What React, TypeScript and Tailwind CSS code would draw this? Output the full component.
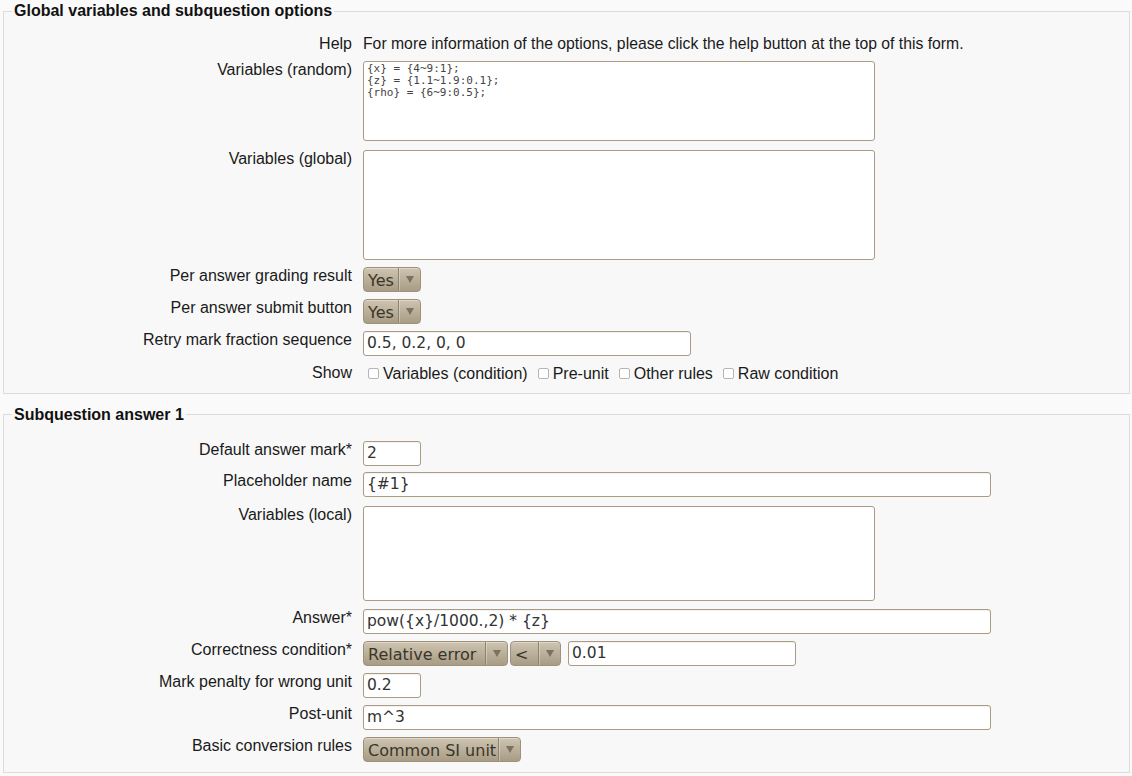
import type { ReactNode } from 'react';

const labelFont = { fontFamily: '"Liberation Sans", Arial, sans-serif' };

function Row({ label, children, className = '' }: { label: string; children: ReactNode; className?: string }) {
  return (
    <div className={`flex items-start ${className}`}>
      <div className="w-[348px] shrink-0 text-right text-[16px] leading-[18px] text-[#1a1a1a] pt-[0.5px] whitespace-nowrap">{label}</div>
      <div className="ml-[11px] flex items-start">{children}</div>
    </div>
  );
}

function TextInput({ value, width }: { value: string; width: string }) {
  return (
    <div
      className={`${width} h-[25px] rounded-[3px] border border-[#a99c82] bg-white pl-[3px] text-[15.5px] leading-[23px] text-[#333] overflow-hidden whitespace-nowrap shadow-[inset_0_1px_1px_rgba(0,0,0,0.06)]`}
      style={{ fontFamily: '"DejaVu Sans", sans-serif' }}
    >
      {value}
    </div>
  );
}

function TextArea({ lines, height }: { lines: string[]; height: string }) {
  return (
    <div
      className={`w-[512px] ${height} rounded-[3px] border border-[#a99c82] bg-white px-[3px] pt-[1px] text-[11px] leading-[12px] text-[#444] whitespace-pre`}
      style={{ fontFamily: '"DejaVu Sans Mono", monospace' }}
    >
      {lines.join('\n')}
    </div>
  );
}

function Arrow() {
  return (
    <svg width="8" height="7" viewBox="0 0 8 7" className="block">
      <polygon points="0,0 8,0 4,7" fill="#7a7161" />
    </svg>
  );
}

function Select({ value, width, arrow = 'w-[22px]' }: { value: string; width: string; arrow?: string }) {
  return (
    <div
      className={`${width} h-[25px] flex rounded-[4px] border border-[#9d917b] bg-gradient-to-b from-[#cec4b0] to-[#a89c85] overflow-hidden shadow-[inset_0_1px_0_rgba(255,255,255,0.35)]`}
      style={{ fontFamily: '"DejaVu Sans", sans-serif' }}
    >
      <div className="flex-1 min-w-0 overflow-hidden whitespace-nowrap pl-[4px] text-[16px] leading-[25px] text-[#3a352c]">{value}</div>
      <div className={`${arrow} shrink-0 flex items-center justify-center border-l border-[#8e836e] shadow-[inset_1px_0_0_rgba(255,255,255,0.3)]`}>
        <Arrow />
      </div>
    </div>
  );
}

function Check({ label }: { label: string }) {
  return (
    <div className="flex items-center">
      <span className="ml-[5px] mr-[4px] inline-block w-[11px] h-[11px] rounded-[2px] border border-[#b5b5b5] bg-white" />
      <span className="text-[16px] leading-[18px] text-[#1a1a1a] whitespace-nowrap">{label}</span>
    </div>
  );
}

function Legend({ children }: { children: ReactNode }) {
  return (
    <legend className="ml-[8px] px-[2px] text-[16px] leading-[18px] font-bold text-[#111]">{children}</legend>
  );
}

export default function App() {
  return (
    <div className="min-h-[776px] w-[1132px] bg-[#fafafa] pt-[2px] pl-[3px] pr-[2px]" style={labelFont}>
      <fieldset className="border border-[#dcdcdc] bg-[#f8f8f8] pb-[10px]">
        <Legend>Global variables and subquestion options</Legend>
        <Row label="Help" className="mt-[14px]">
          <div className="text-[15.75px] leading-[18px] pt-[0.5px] text-[#1a1a1a] whitespace-nowrap">
            For more information of the options, please click the help button at the top of this form.
          </div>
        </Row>
        <Row label="Variables (random)" className="mt-[8px]">
          <TextArea lines={['{x} = {4~9:1};', '{z} = {1.1~1.9:0.1};', '{rho} = {6~9:0.5};']} height="h-[80px]" />
        </Row>
        <Row label="Variables (global)" className="mt-[9px]">
          <TextArea lines={[]} height="h-[110px]" />
        </Row>
        <Row label="Per answer grading result" className="mt-[7px]">
          <Select value="Yes" width="w-[58px]" />
        </Row>
        <Row label="Per answer submit button" className="mt-[7px]">
          <Select value="Yes" width="w-[58px]" />
        </Row>
        <Row label="Retry mark fraction sequence" className="mt-[7px]">
          <TextInput value="0.5, 0.2, 0, 0" width="w-[328px]" />
        </Row>
        <Row label="Show" className="mt-[8px]">
          <div className="flex items-center gap-[5px] pt-[1px]">
            <Check label="Variables (condition)" />
            <Check label="Pre-unit" />
            <Check label="Other rules" />
            <Check label="Raw condition" />
          </div>
        </Row>
      </fieldset>

      <fieldset className="mt-[12px] border border-[#dcdcdc] bg-[#f8f8f8] pb-[10px]">
        <Legend>Subquestion answer 1</Legend>
        <Row label="Default answer mark*" className="mt-[17px]">
          <TextInput value="2" width="w-[58px]" />
        </Row>
        <Row label="Placeholder name" className="mt-[6px]">
          <TextInput value="{#1}" width="w-[628px]" />
        </Row>
        <Row label="Variables (local)" className="mt-[9px]">
          <TextArea lines={[]} height="h-[95px]" />
        </Row>
        <Row label="Answer*" className="mt-[8px]">
          <TextInput value="pow({x}/1000.,2) * {z}" width="w-[628px]" />
        </Row>
        <Row label="Correctness condition*" className="mt-[7px]">
          <Select value="Relative error" width="w-[145px]" />
          <div className="ml-[2px]">
            <Select value="<" width="w-[51px]" />
          </div>
          <div className="ml-[7px]">
            <TextInput value="0.01" width="w-[228px]" />
          </div>
        </Row>
        <Row label="Mark penalty for wrong unit" className="mt-[7px]">
          <TextInput value="0.2" width="w-[58px]" />
        </Row>
        <Row label="Post-unit" className="mt-[7px]">
          <TextInput value="m^3" width="w-[628px]" />
        </Row>
        <Row label="Basic conversion rules" className="mt-[7px]">
          <Select value="Common SI unit" width="w-[158px]" />
        </Row>
      </fieldset>
    </div>
  );
}
